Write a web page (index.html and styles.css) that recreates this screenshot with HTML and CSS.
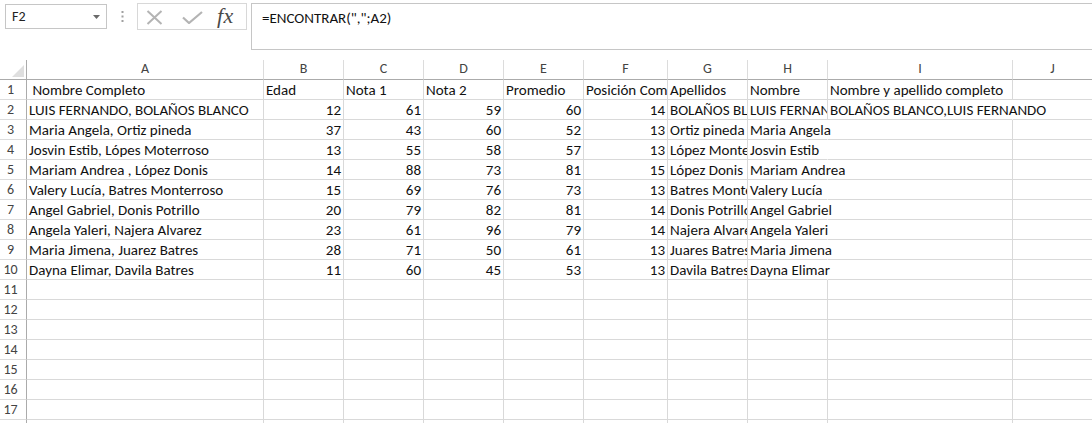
FILE: index.html
```
<!DOCTYPE html>
<html lang="es">
<head>
<meta charset="utf-8">
<title>Excel</title>
<link rel="stylesheet" href="styles.css">
</head>
<body>
<div class="fbar">
  <div class="namebox">
    <span class="nb-text">F2</span>
    <svg class="nb-arrow" width="7" height="4" viewBox="0 0 7 4"><path d="M0 0h7L3.5 4z" fill="#6a6a6a"/></svg>
  </div>
  <div class="grip">
    <svg width="3" height="11" viewBox="0 0 3 11"><rect x="0.5" y="0" width="2" height="2" fill="#a0a0a0"/><rect x="0.5" y="4.5" width="2" height="2" fill="#a0a0a0"/><rect x="0.5" y="9" width="2" height="2" fill="#a0a0a0"/></svg>
  </div>
  <div class="btns">
    <svg class="ic-x" width="17" height="15" viewBox="0 0 17 15"><path d="M1.5 1L15.5 14M15.5 1L1.5 14" stroke="#b4b4b4" stroke-width="2" fill="none"/></svg>
    <svg class="ic-ok" width="21" height="13" viewBox="0 0 21 13"><path d="M1 6.5L7 12L20 1" stroke="#b4b4b4" stroke-width="2.2" fill="none"/></svg>
    <span class="ic-fx">fx</span>
  </div>
  <div class="formula">=ENCONTRAR(",";A2)</div>
</div>

<div class="sheet">
  <div class="corner"><svg width="12" height="12" viewBox="0 0 12 12"><path d="M12 0V12H0z" fill="#dfdfdf"/></svg></div>
  <div class="ch">A</div><div class="ch">B</div><div class="ch">C</div><div class="ch">D</div><div class="ch">E</div><div class="ch">F</div><div class="ch">G</div><div class="ch">H</div><div class="ch">I</div><div class="ch">J</div>

  <div class="rh">1</div>
  <div class="c">&nbsp;Nombre Completo</div><div class="c">Edad</div><div class="c">Nota 1</div><div class="c">Nota 2</div><div class="c">Promedio</div><div class="c">Posición Comparativa</div><div class="c">Apellidos</div><div class="c">Nombre</div><div class="c">Nombre y apellido completo</div><div class="c"></div>

  <div class="rh">2</div>
  <div class="c">LUIS FERNANDO, BOLAÑOS BLANCO</div><div class="c n">12</div><div class="c n">61</div><div class="c n">59</div><div class="c n">60</div><div class="c n">14</div><div class="c">BOLAÑOS BLANCO</div><div class="c">LUIS FERNANDO</div><div class="c ov">BOLAÑOS BLANCO,LUIS FERNANDO</div><div class="c"></div>

  <div class="rh">3</div>
  <div class="c">Maria Angela, Ortiz pineda</div><div class="c n">37</div><div class="c n">43</div><div class="c n">60</div><div class="c n">52</div><div class="c n">13</div><div class="c">Ortiz pineda</div><div class="c ov">Maria Angela</div><div class="c"></div><div class="c"></div>

  <div class="rh">4</div>
  <div class="c">Josvin Estib, Lópes Moterroso</div><div class="c n">13</div><div class="c n">55</div><div class="c n">58</div><div class="c n">57</div><div class="c n">13</div><div class="c">López Monterroso</div><div class="c ov">Josvin Estib</div><div class="c"></div><div class="c"></div>

  <div class="rh">5</div>
  <div class="c">Mariam Andrea , López Donis</div><div class="c n">14</div><div class="c n">88</div><div class="c n">73</div><div class="c n">81</div><div class="c n">15</div><div class="c">López Donis</div><div class="c ov">Mariam Andrea</div><div class="c"></div><div class="c"></div>

  <div class="rh">6</div>
  <div class="c">Valery Lucía, Batres Monterroso</div><div class="c n">15</div><div class="c n">69</div><div class="c n">76</div><div class="c n">73</div><div class="c n">13</div><div class="c">Batres Monterroso</div><div class="c ov">Valery Lucía</div><div class="c"></div><div class="c"></div>

  <div class="rh">7</div>
  <div class="c">Angel Gabriel, Donis Potrillo</div><div class="c n">20</div><div class="c n">79</div><div class="c n">82</div><div class="c n">81</div><div class="c n">14</div><div class="c">Donis Potrillo</div><div class="c ov">Angel Gabriel</div><div class="c"></div><div class="c"></div>

  <div class="rh">8</div>
  <div class="c">Angela Yaleri, Najera Alvarez</div><div class="c n">23</div><div class="c n">61</div><div class="c n">96</div><div class="c n">79</div><div class="c n">14</div><div class="c">Najera Alvarez</div><div class="c ov">Angela Yaleri</div><div class="c"></div><div class="c"></div>

  <div class="rh">9</div>
  <div class="c">Maria Jimena, Juarez Batres</div><div class="c n">28</div><div class="c n">71</div><div class="c n">50</div><div class="c n">61</div><div class="c n">13</div><div class="c">Juares Batres</div><div class="c ov">Maria Jimena</div><div class="c"></div><div class="c"></div>

  <div class="rh">10</div>
  <div class="c">Dayna Elimar, Davila Batres</div><div class="c n">11</div><div class="c n">60</div><div class="c n">45</div><div class="c n">53</div><div class="c n">13</div><div class="c">Davila Batres</div><div class="c ov">Dayna Elimar</div><div class="c"></div><div class="c"></div>

  <div class="rh">11</div><div class="c"></div><div class="c"></div><div class="c"></div><div class="c"></div><div class="c"></div><div class="c"></div><div class="c"></div><div class="c"></div><div class="c"></div><div class="c"></div>
  <div class="rh">12</div><div class="c"></div><div class="c"></div><div class="c"></div><div class="c"></div><div class="c"></div><div class="c"></div><div class="c"></div><div class="c"></div><div class="c"></div><div class="c"></div>
  <div class="rh">13</div><div class="c"></div><div class="c"></div><div class="c"></div><div class="c"></div><div class="c"></div><div class="c"></div><div class="c"></div><div class="c"></div><div class="c"></div><div class="c"></div>
  <div class="rh">14</div><div class="c"></div><div class="c"></div><div class="c"></div><div class="c"></div><div class="c"></div><div class="c"></div><div class="c"></div><div class="c"></div><div class="c"></div><div class="c"></div>
  <div class="rh">15</div><div class="c"></div><div class="c"></div><div class="c"></div><div class="c"></div><div class="c"></div><div class="c"></div><div class="c"></div><div class="c"></div><div class="c"></div><div class="c"></div>
  <div class="rh">16</div><div class="c"></div><div class="c"></div><div class="c"></div><div class="c"></div><div class="c"></div><div class="c"></div><div class="c"></div><div class="c"></div><div class="c"></div><div class="c"></div>
  <div class="rh">17</div><div class="c"></div><div class="c"></div><div class="c"></div><div class="c"></div><div class="c"></div><div class="c"></div><div class="c"></div><div class="c"></div><div class="c"></div><div class="c"></div>
  <div class="rh">18</div><div class="c"></div><div class="c"></div><div class="c"></div><div class="c"></div><div class="c"></div><div class="c"></div><div class="c"></div><div class="c"></div><div class="c"></div><div class="c"></div>
</div>
</body>
</html>
```
FILE: styles.css
```
html, body {
  margin: 0;
  padding: 0;
  background: #fff;
}
body {
  width: 1092px;
  height: 423px;
  overflow: hidden;
  font-family: "Carlito", "Liberation Sans", sans-serif;
  font-size: 15px;
  color: #000;
}

/* formula bar */
.fbar {
  display: flex;
  align-items: flex-start;
  height: 60px;
  padding-top: 3px;
  box-sizing: border-box;
}
.namebox {
  margin-left: 5px;
  margin-top: 1px;
  width: 102px;
  height: 25px;
  box-sizing: border-box;
  border: 1px solid #c6c6c6;
  display: flex;
  align-items: center;
  justify-content: space-between;
  padding: 0 6px 0 6px;
  font-size: 14px;
  color: #222;
}
.nb-arrow { margin-top: 1px; }
.grip {
  width: 30px;
  height: 27px;
  display: flex;
  align-items: center;
  justify-content: center;
}
.btns {
  width: 110px;
  height: 27px;
  box-sizing: border-box;
  border: 1px solid #d8d8d8;
  display: flex;
  align-items: center;
  padding-left: 8px;
}
.ic-x { margin-top: 2px; }
.ic-ok { margin-left: 19px; margin-top: 2px; }
.ic-fx {
  margin-left: 14px;
  font-family: "Liberation Serif", serif;
  font-style: italic;
  font-size: 22px;
  color: #4a4a4a;
  line-height: 1;
  margin-top: -2px;
  letter-spacing: 0.5px;
}
.formula {
  margin-left: 4px;
  flex: 1;
  height: 47px;
  box-sizing: border-box;
  border: 1px solid #c6c6c6;
  border-right: none;
  padding: 4px 0 0 10px;
  font-size: 15px;
  line-height: 20px;
  color: #111;
}

/* sheet grid */
.sheet {
  display: grid;
  grid-template-columns: 27px 237px 80px 80px 80px 80px 84px 80px 80px 185px 80px;
  grid-auto-rows: 20px;
}
.corner, .ch, .rh, .c {
  box-sizing: border-box;
  white-space: nowrap;
  overflow: hidden;
  line-height: 20px;
}
.corner {
  border-right: 1px solid #ababab;
  border-bottom: 1px solid #ababab;
  display: flex;
  align-items: flex-end;
  justify-content: flex-end;
  padding: 0 2px 2px 0;
}
.corner svg { display: block; }
.ch {
  border-right: 1px solid #dcdcdc;
  border-bottom: 1px solid #ababab;
  text-align: center;
  color: #444;
  font-size: 14px;
  line-height: 18px;
}
.rh {
  border-right: 1px solid #ababab;
  border-bottom: 1px solid #dcdcdc;
  text-align: center;
  color: #444;
  font-size: 14px;
  line-height: 20px;
  padding-right: 5px;
}
.c {
  border-right: 1px solid #d9d9d9;
  border-bottom: 1px solid #d9d9d9;
  padding: 0 2px;
  line-height: 20px;
  color: #111;
}
.c.n { text-align: right; }
.c.ov {
  overflow: visible;
  border-right-color: transparent;
}
```
